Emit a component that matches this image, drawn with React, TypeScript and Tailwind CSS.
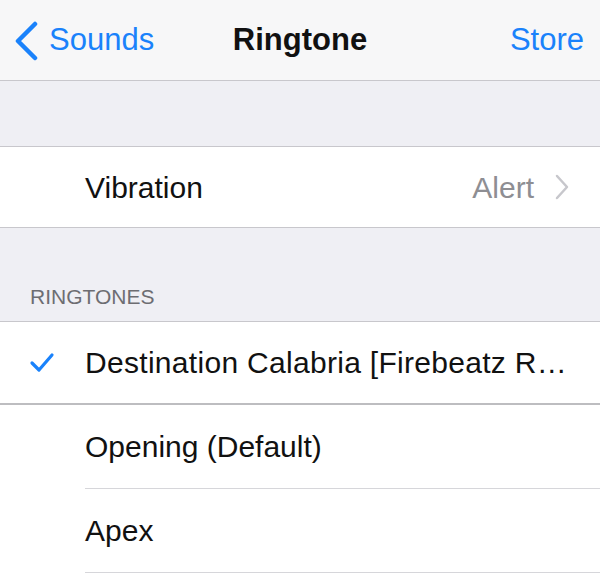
import React from 'react';

const font = {fontFamily: '"Liberation Sans", Arial, sans-serif'};

function BackChevron() {
  return (
    <svg width="26" height="40" viewBox="0 0 26 40" className="shrink-0">
      <polyline points="21,3 4,20 21,37" fill="none" stroke="#1a82fb" strokeWidth="4.5" strokeLinecap="round" strokeLinejoin="round" />
    </svg>
  );
}

function Disclosure() {
  return (
    <svg width="16" height="26" viewBox="0 0 16 26">
      <polyline points="3,2 13,13 3,24" fill="none" stroke="#c7c7cc" strokeWidth="2.5" strokeLinecap="round" strokeLinejoin="round" />
    </svg>
  );
}

function Check() {
  return (
    <svg width="26" height="22" viewBox="0 0 26 22">
      <polyline points="3,11 10,18 23,3" fill="none" stroke="#1a82fb" strokeWidth="3.2" strokeLinecap="round" strokeLinejoin="round" />
    </svg>
  );
}

const ringtones = ['Opening (Default)', 'Apex'];

export default function App() {
  return (
    <div className="w-[600px] h-[573px] overflow-hidden bg-[#efeff4] text-[30px] text-[#111]" style={font}>
      <div className="h-[81px] bg-[#f7f7f8] border-b border-[#c8c7cc] flex items-center justify-between px-[14px] relative">
        <div className="flex items-center gap-[9px] text-[#1a82fb] pt-[1px]">
          <BackChevron />
          <span className="text-[31px]">Sounds</span>
        </div>
        <div className="absolute left-0 right-0 text-center font-bold text-[31px] pointer-events-none">Ringtone</div>
        <span className="text-[31px] text-[#1a82fb] pr-[2px]">Store</span>
      </div>

      <div className="h-[65px]" />

      <div className="bg-white border-y border-[#c8c7cc] h-[82px] flex items-center pl-[85px] pr-[30px]">
        <span className="flex-1">Vibration</span>
        <span className="text-[#8e8e93] mr-[20px]">Alert</span>
        <Disclosure />
      </div>

      <div className="h-[93px] flex items-end pb-[9px] pl-[30px] text-[21px] text-[#6d6d72]">RINGTONES</div>

      <div className="bg-white border-t border-[#c8c7cc]">
        <div className="h-[83px] flex items-center border-b-2 border-[#bdbdc0]">
          <div className="w-[85px] flex justify-start pl-[29px]">
            <Check />
          </div>
          <span className="whitespace-nowrap tracking-[0.3px]">Destination Calabria [Firebeatz R…</span>
        </div>
        {ringtones.map((name) => (
          <div key={name} className="pl-[85px]">
            <div className="h-[84px] flex items-center border-b border-[#d6d6da]">{name}</div>
          </div>
        ))}
      </div>
    </div>
  );
}
